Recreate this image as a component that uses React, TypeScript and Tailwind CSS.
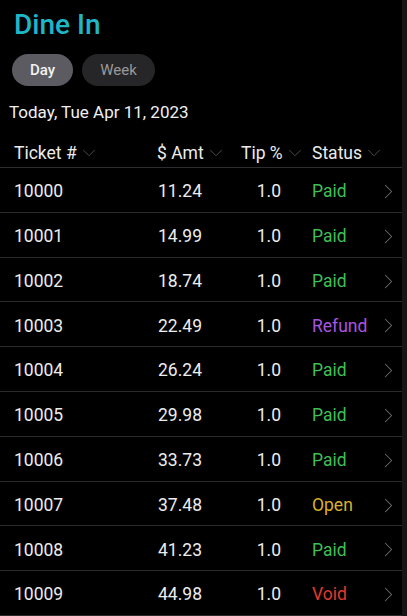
import { ChevronDown, ChevronRight } from "lucide-react";

type Ticket = {
  id: string;
  amt: string;
  tip: string;
  status: "Paid" | "Refund" | "Open" | "Void";
};

const tickets: Ticket[] = [
  { id: "10000", amt: "11.24", tip: "1.0", status: "Paid" },
  { id: "10001", amt: "14.99", tip: "1.0", status: "Paid" },
  { id: "10002", amt: "18.74", tip: "1.0", status: "Paid" },
  { id: "10003", amt: "22.49", tip: "1.0", status: "Refund" },
  { id: "10004", amt: "26.24", tip: "1.0", status: "Paid" },
  { id: "10005", amt: "29.98", tip: "1.0", status: "Paid" },
  { id: "10006", amt: "33.73", tip: "1.0", status: "Paid" },
  { id: "10007", amt: "37.48", tip: "1.0", status: "Open" },
  { id: "10008", amt: "41.23", tip: "1.0", status: "Paid" },
  { id: "10009", amt: "44.98", tip: "1.0", status: "Void" },
];

const statusColor = {
  Paid: "text-[#3fbf55]",
  Refund: "text-[#a855e0]",
  Open: "text-[#d9b02e]",
  Void: "text-[#e2392d]",
};

const HeaderCell = ({ label, className }: { label: string; className: string }) => (
  <div className={`flex flex-row items-center gap-[1px] ${className}`}>
    <span>{label}</span>
    <ChevronDown size={22} strokeWidth={1} className="text-[#505050]" />
  </div>
);

const App = () => {
  return (
    <section
      className="w-[407px] h-[616px] overflow-hidden bg-black flex flex-row"
      style={{ fontFamily: "Roboto, 'Liberation Sans', sans-serif" }}
    >
      <div className="w-[402px] flex flex-col">
        <h1 className="pl-[14px] pt-[8px] text-[28px] leading-[34px] text-[#1fb6c8] font-medium">
          Dine In
        </h1>

        <div className="flex flex-row gap-[9px] pl-[12px] mt-[12px]">
          <button className="w-[61px] h-[32px] rounded-full bg-[#5b5b61] text-[#f2f2f2] text-[15px] font-medium">
            Day
          </button>
          <button className="w-[73px] h-[32px] rounded-full bg-[#262628] text-[#9a9a9a] text-[15px]">
            Week
          </button>
        </div>

        <div className="pl-[9px] mt-[15px] text-[17px] leading-[22px] text-[#f0f0f0]">
          Today, Tue Apr 11, 2023
        </div>

        <div className="flex flex-row items-center pl-[14px] pt-[3px] h-[33px] mt-[13px] text-[17.5px] text-[#ececec] border-b border-[#2e2e2e]">
          <HeaderCell label="Ticket #" className="w-[143px]" />
          <HeaderCell label="$ Amt" className="w-[84px]" />
          <HeaderCell label="Tip %" className="w-[71px]" />
          <HeaderCell label="Status" className="flex-1" />
        </div>

        <div className="flex flex-col">
          {tickets.map((t) => (
            <div
              key={t.id}
              className="grid grid-cols-[110px_78px_79px_1fr_auto] items-center pl-[14px] pr-[1px] pt-[3px] h-[44.8px] text-[17.5px] text-[#ededed] border-b border-[#2a2a2a]"
            >
              <span>{t.id}</span>
              <span className="text-right">{t.amt}</span>
              <span className="text-right">{t.tip}</span>
              <span className={`pl-[31px] ${statusColor[t.status]}`}>{t.status}</span>
              <ChevronRight size={25} strokeWidth={1} className="text-[#6e6e6e]" />
            </div>
          ))}
        </div>
      </div>
      <div className="w-[5px] h-full bg-[#151515]" />
    </section>
  );
};

export default App;
